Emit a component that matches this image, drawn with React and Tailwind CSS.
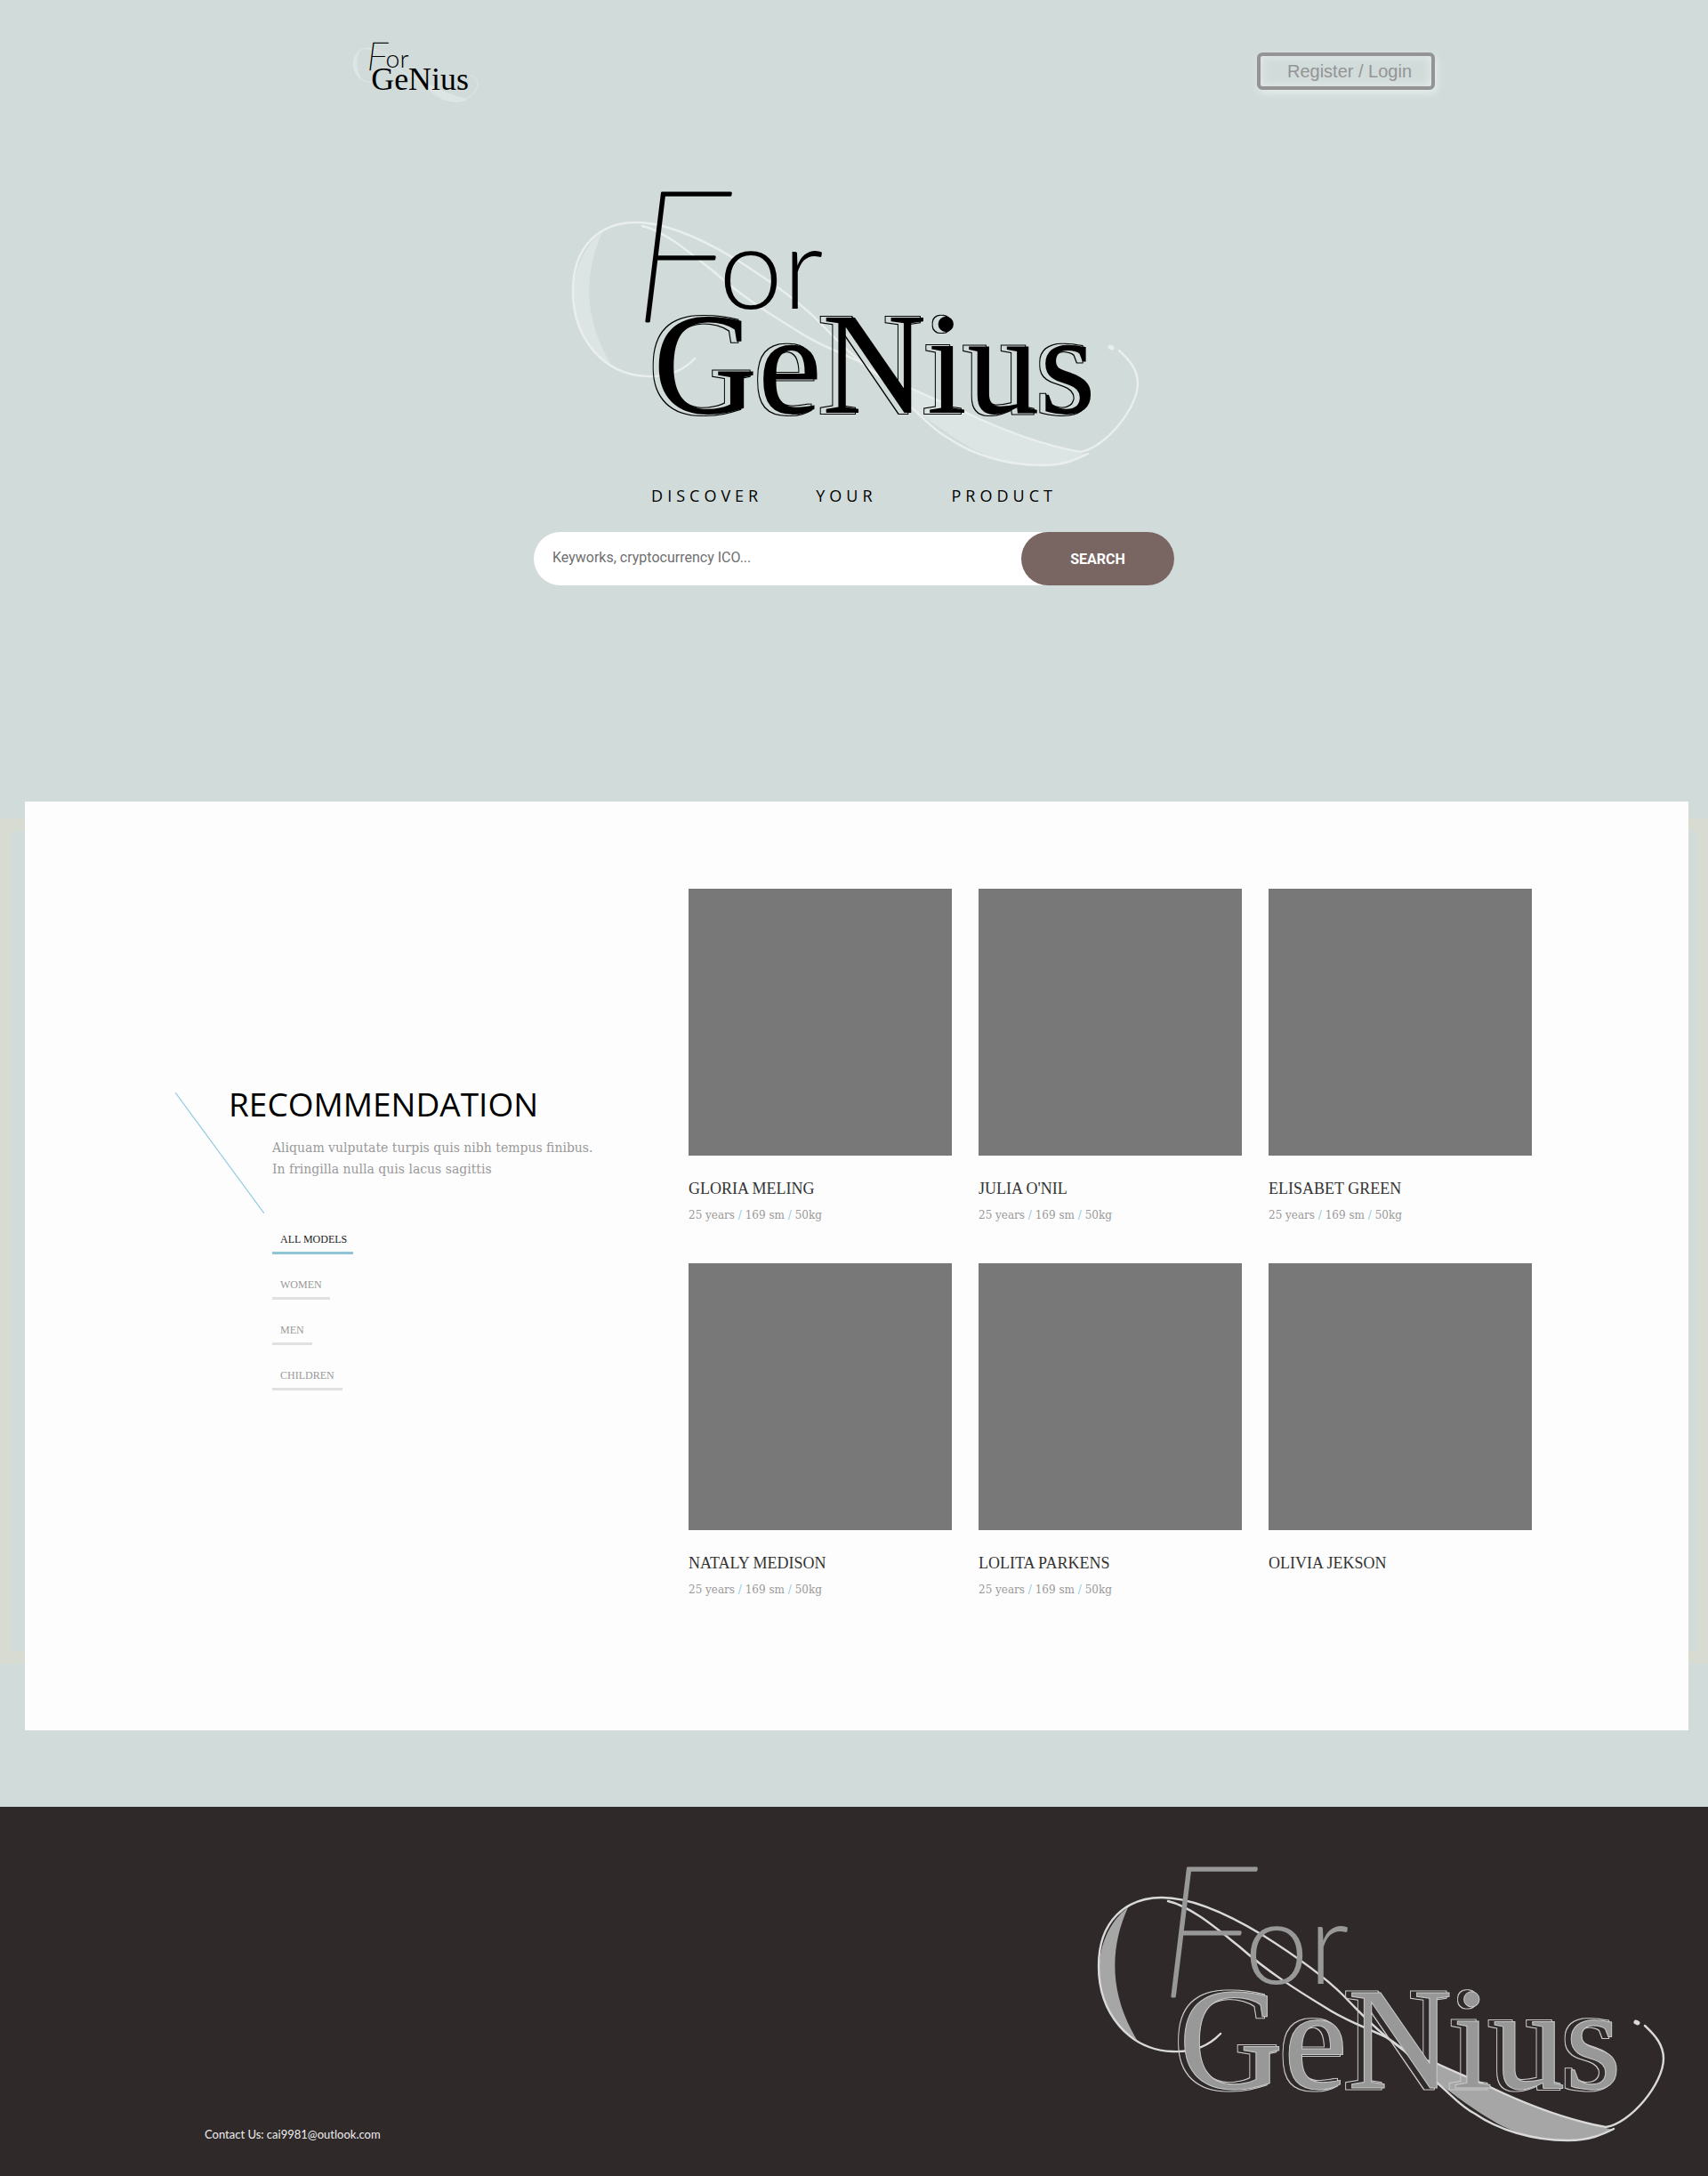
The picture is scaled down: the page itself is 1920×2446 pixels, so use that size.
import React, { useId } from "react";

const themes = {
  dark: { ink: "#000000", edge: "none", edgeWidth: 0, line: "#eaefee", fill: "#dde5e4" },
  metal: { ink: "#989898", edge: "#c9c9c9", edgeWidth: 1, line: "#d9d9d9", fill: "#a6a6a6" },
};

function Logo({ theme = "dark", engraved = true, className }) {
  const t = themes[theme];
  const id = useId();
  return (
    <svg viewBox="0 0 680 350" overflow="visible" className={className} role="img" aria-label="For GeNius">
      <defs>
        <filter id={id} x="-5%" y="-5%" width="110%" height="110%">
          <feMorphology in="SourceAlpha" operator="dilate" radius="2" result="fat" />
          <feMorphology in="SourceAlpha" operator="dilate" radius="1" result="slim" />
          <feComposite in="fat" in2="slim" operator="out" result="ring" />
          <feOffset in="ring" dx="-5" dy="0" result="shifted" />
          <feFlood floodColor={theme === "metal" ? t.edge : t.ink} />
          <feComposite in2="shifted" operator="in" result="outline" />
          <feMerge>
            <feMergeNode in="outline" />
            <feMergeNode in="SourceGraphic" />
          </feMerge>
        </filter>
      </defs>
      <g fill={t.fill}>
        <path d="M57 71C12 105 12 190 67 220C36 168 36 118 57 71Z" />
        <path d="M345 215C365 228 382 240 403 246C424 254 444 263 464 273C508 294 548 310 603 321C565 341 515 334 478 317C445 299 425 282 403 267C382 250 366 230 345 215Z" />
      </g>
      <g fill="none" stroke={t.line} strokeWidth="2.4" strokeLinecap="round">
        <path d="M161 213C146 229 128 234 107 233C58 231 24 190 24 137C24 86 55 60 95 60C130 60 170 79 208 102C246 126 281 152 299 170C318 190 345 217 369 233C382 241 392 243 403 246C424 256 444 264 464 273C510 295 556 311 594 318C622 314 659 269 659 241C659 226 650 215 638 204" />
        <path d="M102 64C128 70 158 96 182 115C216 145 250 166 278 183C302 199 325 206 347 217C368 229 385 250 403 267C421 282 430 294 447 303C473 321 512 333 551 333C577 333 591 326 603 320" />
        <path d="M628 200L630 201" strokeWidth="5" />
      </g>
      <g fill={t.ink}>
        <text className="font-['Lato',sans-serif]" stroke={t.ink} strokeLinejoin="round">
          <tspan x="92" y="171" fontSize="204" fontStyle="italic" fontWeight="100" strokeWidth="3">F</tspan>
          <tspan x="188" y="157" fontSize="129" fontWeight="300" strokeWidth="0">or</tspan>
        </text>
        <text
          x="114"
          y="274"
          fontSize="163"
          stroke={t.edge}
          strokeWidth={t.edgeWidth}
          className="font-['Liberation_Serif',serif]"
          filter={engraved ? `url(#${id})` : undefined}
        >
          GeNius
        </text>
      </g>
    </svg>
  );
}

const models = [
  { name: "GLORIA MELING", stats: true },
  { name: "JULIA O'NIL", stats: true },
  { name: "ELISABET GREEN", stats: true },
  { name: "NATALY MEDISON", stats: true },
  { name: "LOLITA PARKENS", stats: true },
  { name: "OLIVIA JEKSON", stats: false },
];

const filters = ["ALL MODELS", "WOMEN", "MEN", "CHILDREN"];

function Slash() {
  return <span className="text-[#8fcbe0]">/</span>;
}

function ModelCard({ name, stats }) {
  return (
    <article>
      <div className="h-[300px] bg-[#787878]" />
      <h3 className="mt-[23px] font-['Liberation_Serif',serif] text-[18px] leading-7 text-[#333]">{name}</h3>
      {stats && (
        <p className="mt-1.5 font-['DejaVu_Serif',serif] text-[12px] leading-5 text-[#999]">
          25 years <Slash /> 169 sm <Slash /> 50kg
        </p>
      )}
    </article>
  );
}

export default function App() {
  return (
    <div className="bg-[#d1dbda] font-['Open_Sans',sans-serif] text-black">
      <header className="flex items-center justify-between pt-[41px] pr-[307px] pl-[392px]">
        <a href="#home">
          <Logo engraved={false} className="block h-[77px] w-[150px]" />
        </a>
        <button className="h-[42px] w-[200px] rounded-md border-4 border-[#949494] pl-2 font-['Liberation_Sans',sans-serif] text-[20px] leading-none text-[#949494] shadow-[2px_4px_8px_#e6eeec,inset_0_0_12px_#e6eeec]">
          Register / Login
        </button>
      </header>

      <section className="flex flex-col items-center pt-[72px]">
        <Logo className="block h-[350px] w-[680px]" />
        <p className="mt-[3px] flex text-[18px] leading-7 tracking-[5px]">
          <span>DISCOVER</span>
          <span className="ml-15">YOUR</span>
          <span className="ml-21">PRODUCT</span>
        </p>
        <form
          className="mt-[27px] flex h-[60px] w-[720px] rounded-full bg-white font-['Roboto',sans-serif] text-[16px]"
          onSubmit={(e) => e.preventDefault()}
        >
          <input
            type="text"
            aria-label="Search keywords"
            placeholder="Keyworks, cryptocurrency ICO..."
            className="min-w-0 flex-1 rounded-l-full pb-0.5 pl-[21px] outline-none placeholder:text-[#6f6f6f]"
          />
          <button className="w-[172px] rounded-full bg-[#796662] pt-0.5 font-bold text-white">SEARCH</button>
        </form>
      </section>

      <main className="relative mt-[243px]">
        <div className="absolute inset-x-0 top-[19px] bottom-[75px] border-14 border-[#d8dbd1]" />
        <div className="relative mr-[22px] ml-7 flex bg-[#fdfdfd] pt-[98px] pb-[148px]">
          <aside className="relative w-[746px] shrink-0 pt-[218px] pl-[229px]">
            <svg viewBox="0 0 100 136" className="absolute top-[229px] left-[169px] h-[136px] w-[100px]" aria-hidden="true">
              <path d="M0 0L100 136" stroke="#93cbdf" strokeWidth="1.2" />
            </svg>
            <h2 className="text-[37px] leading-[48px]">RECOMMENDATION</h2>
            <p className="mt-[13px] ml-[49px] font-['DejaVu_Serif',serif] text-[14px] leading-6 text-[#999]">
              Aliquam vulputate turpis quis nibh tempus finibus.
              <br />
              In fringilla nulla quis lacus sagittis
            </p>
            <div className="mt-[53px] ml-[49px] flex flex-col items-start gap-5 font-['Liberation_Serif',serif] text-[12px]">
              {filters.map((label, i) => (
                <button
                  key={label}
                  className={
                    i === 0
                      ? "h-[31px] border-b-3 border-[#90c5d8] pt-px pr-[7px] pb-0.5 pl-[9px] text-[#222]"
                      : "h-[31px] border-b-3 border-[#e1e1e1] pt-px pr-[9px] pb-0.5 pl-[9px] text-[#999]"
                  }
                >
                  {label}
                </button>
              ))}
            </div>
          </aside>
          <div className="grid grid-cols-[repeat(3,296px)] content-start gap-x-[30px] gap-y-11">
            {models.map((m) => (
              <ModelCard key={m.name} {...m} />
            ))}
          </div>
        </div>
      </main>

      <footer className="mt-[86px] flex items-end justify-between bg-[#2f2929] pt-[42px] pr-[29px] pb-[23px] pl-[230px]">
        <p className="pb-[14px] font-['Lato',sans-serif] text-[13px] leading-5 text-[#eee]">Contact Us: cai9981@outlook.com</p>
        <Logo theme="metal" className="block h-[350px] w-[680px]" />
      </footer>
    </div>
  );
}
